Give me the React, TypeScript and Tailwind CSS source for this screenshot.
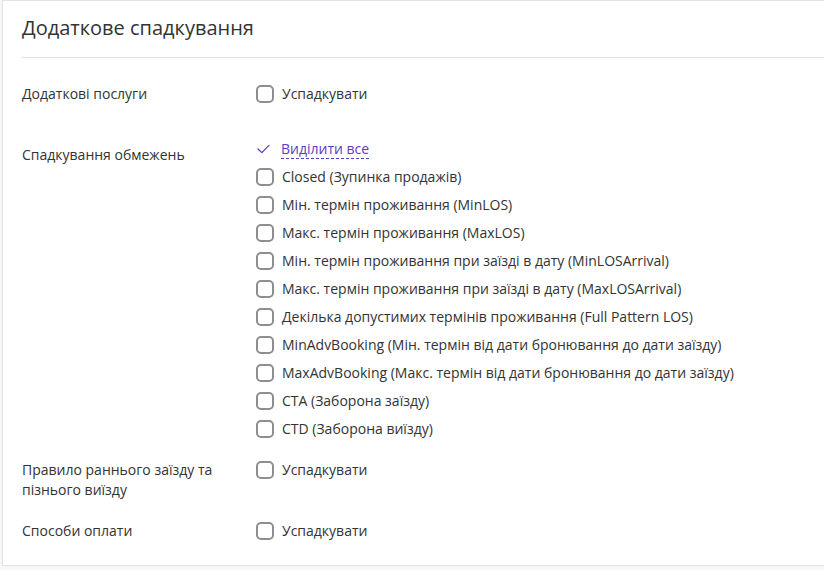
import React from "react";

const Box = () => (
  <span className="w-[18px] h-[18px] shrink-0 rounded-[5px] border-2 border-[#8e8e8e] bg-white" />
);

const CheckItem = ({ label }: { label: string }) => (
  <div className="h-[28px] flex items-center gap-[8px]">
    <Box />
    <span>{label}</span>
  </div>
);

const items = [
  "Closed (Зупинка продажів)",
  "Мін. термін проживання (MinLOS)",
  "Макс. термін проживання (MaxLOS)",
  "Мін. термін проживання при заїзді в дату (MinLOSArrival)",
  "Макс. термін проживання при заїзді в дату (MaxLOSArrival)",
  "Декілька допустимих термінів проживання (Full Pattern LOS)",
  "MinAdvBooking (Мін. термін від дати бронювання до дати заїзду)",
  "MaxAdvBooking (Макс. термін від дати бронювання до дати заїзду)",
  "CTA (Заборона заїзду)",
  "CTD (Заборона виїзду)",
];

export default function App() {
  return (
    <div
      className="w-[824px] h-[570px] bg-[#f7f7f7] overflow-hidden text-[#333333] text-[14px] leading-[20px]"
      style={{ fontFamily: '"Open Sans", "Noto Sans", sans-serif' }}
    >
      <div className="ml-[2px] h-[566px] bg-white border-l border-t border-b border-[#e2e2e2] pl-[19px]">
        <h1 className="pt-[13px] text-[20px] leading-[28px] font-normal text-[#333333]">
          Додаткове спадкування
        </h1>
        <div className="mt-[15px] h-px bg-[#e2e2e2]" />

        <div className="flex mt-[22px]">
          <div className="w-[234px] pt-[4px]">Додаткові послуги</div>
          <CheckItem label="Успадкувати" />
        </div>

        <div className="flex mt-[27px]">
          <div className="w-[234px] pt-[10px]">Спадкування обмежень</div>
          <div className="flex flex-col">
            <div className="h-[28px] flex items-center gap-[11px] pl-[1px]">
              <svg width="13" height="10" viewBox="0 0 13 10" fill="none">
                <path d="M1 5 L4.8 8.6 L12 1.4" stroke="#5b3cc4" strokeWidth="1.3" strokeLinecap="round" strokeLinejoin="round" />
              </svg>
              <span className="text-[#5b3cc4] border-b border-dashed border-[#5b3cc4] leading-[18px]">
                Виділити все
              </span>
            </div>
            {items.map((it) => (
              <CheckItem key={it} label={it} />
            ))}
          </div>
        </div>

        <div className="flex mt-[13px]">
          <div className="w-[234px] pt-[4px]">
            Правило раннього заїзду та
            <br />
            пізнього виїзду
          </div>
          <CheckItem label="Успадкувати" />
        </div>

        <div className="flex mt-[17px]">
          <div className="w-[234px] pt-[4px]">Способи оплати</div>
          <CheckItem label="Успадкувати" />
        </div>
      </div>
    </div>
  );
}
